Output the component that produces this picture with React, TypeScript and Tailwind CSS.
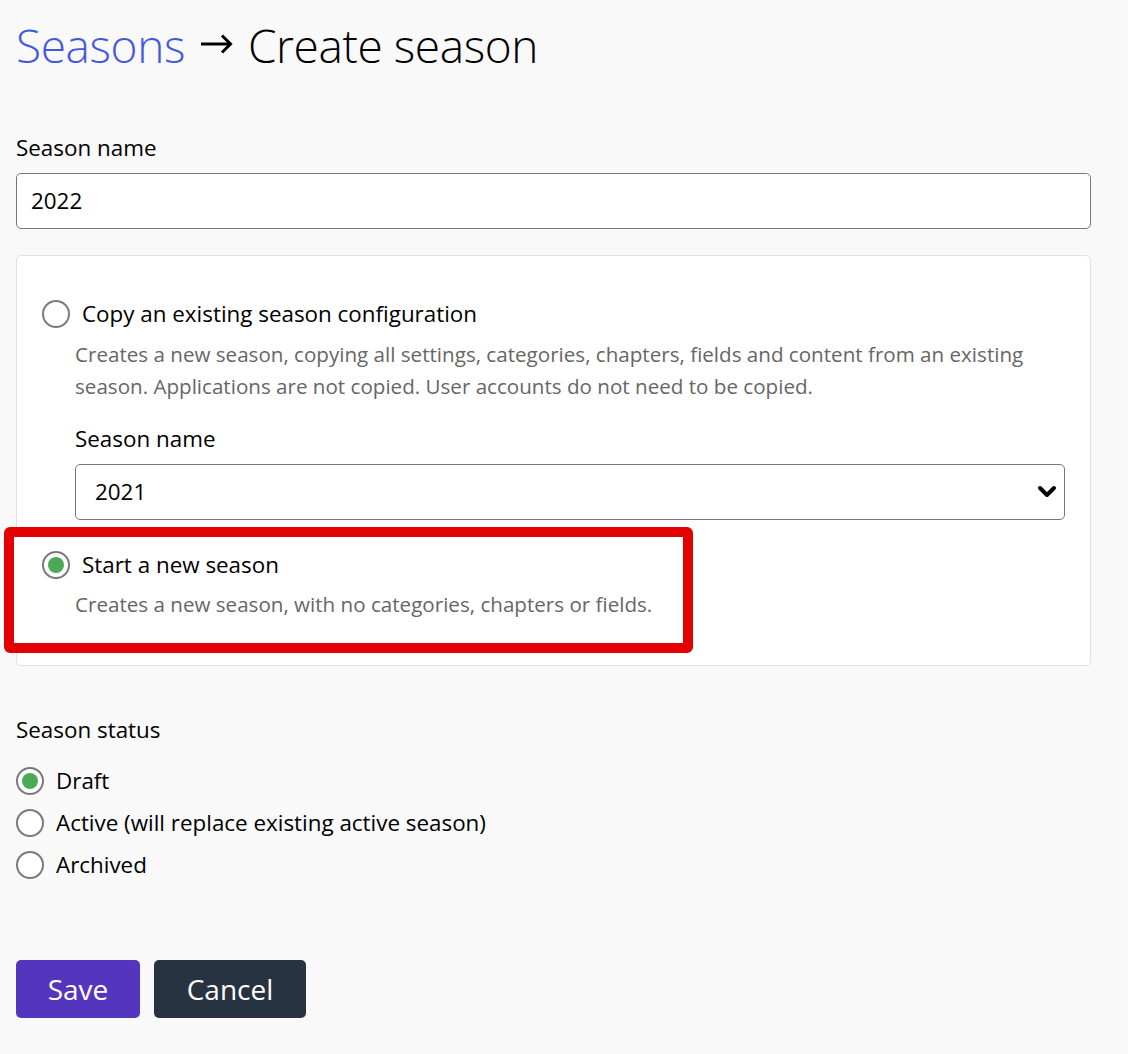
function Radio({ checked = false }: { checked?: boolean }) {
  return (
    <span className="flex h-[28px] w-[28px] shrink-0 items-center justify-center rounded-full border-2 border-[#7a7a7a] bg-white">
      {checked && <span className="h-[16px] w-[16px] rounded-full bg-[#4caa55]" />}
    </span>
  )
}

export default function App() {
  return (
    <div className="min-h-screen bg-[#f9f9f9] px-4 pb-9 font-['Open_Sans',sans-serif] text-black">
      <h1 className="flex items-center pt-[13px] text-[46px] font-light leading-[64px] tracking-[-0.4px]">
        <a className="text-[#4458dd]">Seasons</a>
        <svg
          className="mx-[15px] mt-[-2px]"
          width="33"
          height="20"
          viewBox="0 0 33 20"
          fill="none"
          stroke="black"
          strokeWidth="3"
          strokeLinejoin="miter"
          aria-label="→"
        >
          <path d="M1 10H30" />
          <path d="M22 1.5L30.5 10L22 18.5" />
        </svg>
        <span>Create season</span>
      </h1>

      {/* Season name */}
      <div className="mt-[56px] w-[1075px]">
        <label className="block text-[22.4px] leading-[30px]">Season name</label>
        <div className="mt-[10px] flex h-[56px] items-center rounded-[5px] border-[1.5px] border-[#777] bg-white px-[14px] text-[22.4px]">
          2022
        </div>
      </div>

      {/* Season config card */}
      <div className="mt-[26px] w-[1075px] rounded-[5px] border-[1.5px] border-[#e1e1e1] bg-white px-[25px] pt-[43px] pb-[45px]">
        <div className="flex items-center gap-3">
          <Radio />
          <span className="text-[22.4px] leading-[30px]">Copy an existing season configuration</span>
        </div>
        <div className="ml-[33px]">
          <p className="mt-[9px] text-[20.6px] leading-[32px] text-[#666]">
            Creates a new season, copying all settings, categories, chapters, fields and content from an existing
            season. Applications are not copied. User accounts do not need to be copied.
          </p>
          <label className="mt-[22px] block text-[22.4px] leading-[30px]">Season name</label>
          <div className="mt-[10px] flex h-[56px] items-center justify-between rounded-[5px] border-[1.5px] border-[#777] bg-white pl-[19px] pr-[7px] text-[22.4px]">
            <span>2021</span>
            <svg width="20" height="14" viewBox="0 0 20 14" fill="none" stroke="black" strokeWidth="4" strokeLinecap="round" strokeLinejoin="round">
              <polyline points="3,3 10,10 17,3" />
            </svg>
          </div>
        </div>

        <div className="relative mt-[30px]">
          <span className="absolute -top-[23px] -bottom-[33px] -left-[38px] w-[689px] rounded-[6px] border-[10px] border-[#e30000] bg-white" />
          <div className="relative z-10">
            <div className="flex items-center gap-3">
              <Radio checked />
              <span className="text-[22.4px] leading-[30px]">Start a new season</span>
            </div>
            <p className="ml-[33px] mt-[8px] text-[20.6px] leading-[32px] text-[#666]">
              Creates a new season, with no categories, chapters or fields.
            </p>
          </div>
        </div>
      </div>

      {/* Season status */}
      <div className="mt-[49px]">
        <div className="text-[22.4px] leading-[30px]">Season status</div>
        <div className="mt-[21px] flex flex-col gap-[12px]">
          <label className="flex items-center gap-3">
            <Radio checked />
            <span className="text-[22.4px] leading-[30px]">Draft</span>
          </label>
          <label className="flex items-center gap-3">
            <Radio />
            <span className="text-[22.4px] leading-[30px]">Active (will replace existing active season)</span>
          </label>
          <label className="flex items-center gap-3">
            <Radio />
            <span className="text-[22.4px] leading-[30px]">Archived</span>
          </label>
        </div>
      </div>

      <div className="mt-[80px] flex gap-[14px]">
        <button className="h-[58px] w-[124px] rounded-[5px] bg-[#5436be] text-[28px] text-white">Save</button>
        <button className="h-[58px] w-[152px] rounded-[5px] bg-[#283341] text-[28px] text-white">Cancel</button>
      </div>
    </div>
  )
}
